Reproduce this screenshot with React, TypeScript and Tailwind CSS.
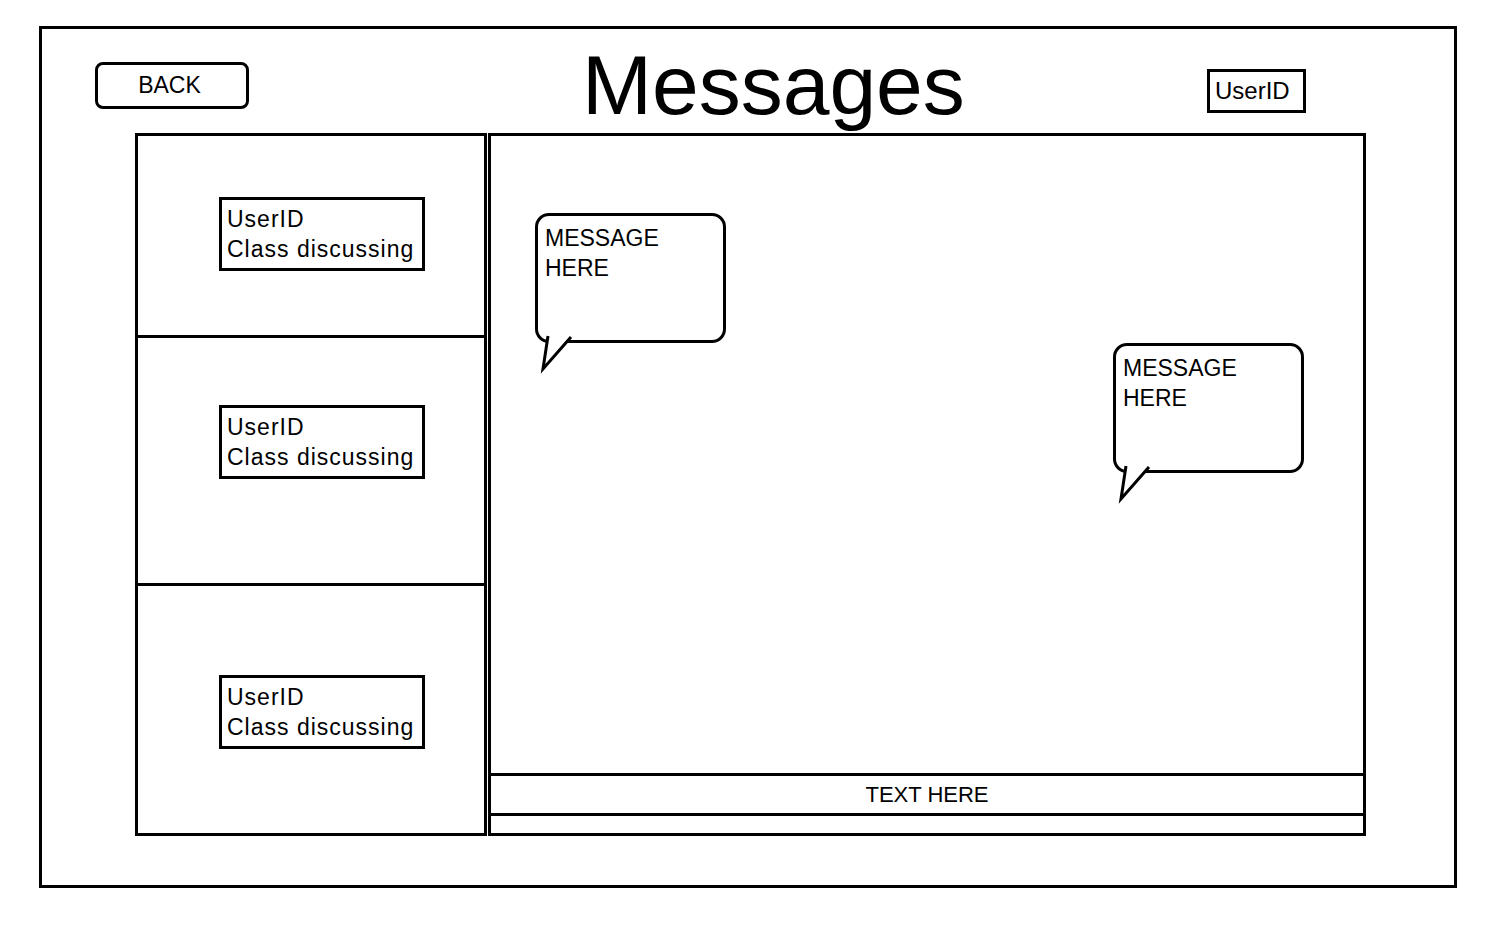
import React from 'react'

function Bubble({ className }: { className: string }) {
    return (
        <div className={`relative w-[191px] h-[130px] rounded-[14px] border-[3px] border-black pl-[7px] pt-[7px] text-[23px] leading-[30px] ${className}`}>
            <div>MESSAGE</div>
            <div>HERE</div>
            {/* tail */}
            <svg className="absolute left-[-3px] top-[calc(100%-5px)]" width="44" height="40" viewBox="0 0 44 40">
                <polygon points="13,0 8,34 36,0" fill="white" />
                <polyline points="13,1 8,34 36,2" fill="none" stroke="black" strokeWidth="3" strokeLinejoin="miter" />
            </svg>
        </div>
    );
}

function ThreadCard() {
    return (
        <div className="ml-[81px] w-[206px] h-[74px] border-[3px] border-black pl-[5px] pt-[4px] text-[23px] leading-[30px] tracking-[1px]">
            <div>UserID</div>
            <div>Class discussing</div>
        </div>
    );
}

export default function App() {
    return (
        <div className="min-h-[930px] w-[1500px] bg-white pt-[26px] pl-[39px] text-black" style={{ fontFamily: '"Liberation Sans", Arial, sans-serif' }}>
            <div className="w-[1418px] h-[862px] border-[3px] border-black flex flex-col">
                {/* Header */}
                <div className="h-[104px] flex items-start">
                    <button className="ml-[53px] mt-[33px] w-[154px] h-[47px] rounded-lg border-[3px] border-black flex items-center justify-center text-[23px] pr-[5px]">
                        BACK
                    </button>
                    <h1 className="ml-[333px] mt-[14px] text-[84px] leading-none font-normal">Messages</h1>
                    <div className="ml-auto mr-[148px] mt-[40px] w-[99px] h-[44px] border-[3px] border-black pl-[5px] flex items-center text-[24px]">
                        UserID
                    </div>
                </div>

                {/* Content */}
                <div className="ml-[93px] h-[703px] flex">
                    {/* Thread list */}
                    <div className="w-[352px] h-full border-[3px] border-black flex flex-col">
                        <div className="h-[202px] border-b-[3px] border-black pt-[61px]">
                            <ThreadCard />
                        </div>
                        <div className="h-[248px] border-b-[3px] border-black pt-[67px]">
                            <ThreadCard />
                        </div>
                        <div className="flex-1 pt-[89px]">
                            <ThreadCard />
                        </div>
                    </div>

                    {/* Chat */}
                    <div className="ml-[1px] w-[878px] h-full border-[3px] border-black flex flex-col">
                        <div className="flex-1 flex flex-col">
                            <Bubble className="self-start ml-[44px] mt-[77px]" />
                            <Bubble className="self-end mr-[59px]" />
                        </div>
                        <div className="h-[40px] border-t-[3px] border-black flex items-center justify-center text-[22px]">
                            TEXT HERE
                        </div>
                        <div className="h-[20px] border-t-[3px] border-black" />
                    </div>
                </div>
            </div>
        </div>
    );
}
